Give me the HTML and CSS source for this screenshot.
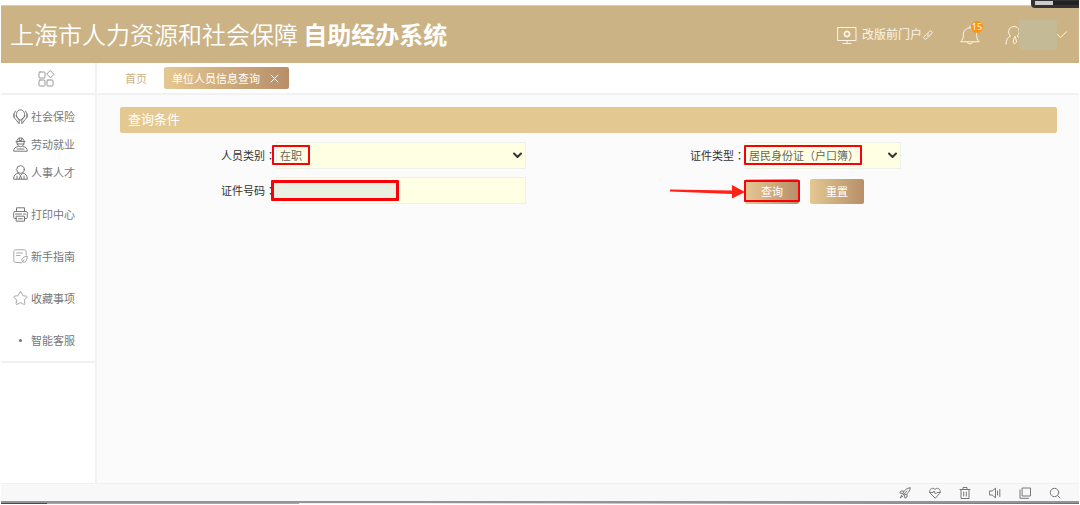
FILE: index.html
```
<!DOCTYPE html>
<html lang="zh-CN">
<head>
<meta charset="utf-8">
<meta name="viewport" content="width=device-width, initial-scale=1">
<title>自助经办系统</title>
<link rel="stylesheet" href="styles.css">
</head>
<body>
<div class="app">
  <header class="header">
    <h1 class="title">上海市人力资源和社会保障 <strong>自助经办系统</strong></h1>
    <div class="header-tools">
      <a class="portal" href="#">
        <svg class="icon" width="20" height="20" viewBox="0 0 20 20"><path d="M1 2.500h18v13H1zM10 15.500v3M6 18.500h8"/><circle cx="10" cy="9" r="2.500" stroke-width="1.500"/><path d="M10 5.800v.5M10 11.700v.5M6.800 9h.5M12.700 9h.5"/></svg>
        <span>改版前门户</span>
        <svg class="icon link-icon" width="10" height="10" viewBox="0 0 10 10"><path d="M4.500 3.200 6.300 1.400a1.600 1.600 0 0 1 2.300 2.300L6.500 5.800a1.600 1.600 0 0 1-2.200 0M5.500 6.800 3.700 8.600a1.600 1.600 0 0 1-2.300-2.300l2.100-2.100a1.600 1.600 0 0 1 2.200 0"/></svg>
      </a>
      <button class="bell" type="button" aria-label="消息">
        <svg class="icon" width="20" height="20" viewBox="0 0 20 20"><path d="M1 16.500c2-2 2.300-3.500 2.300-7a6.700 6.700 0 0 1 13.400 0c0 3.500.3 5 2.300 7zM7 17c.7 2.500 5.300 2.500 6 0M10 2.800V1"/></svg>
        <span class="badge">15</span>
      </button>
      <button class="user" type="button" aria-label="用户">
        <svg class="icon" width="16" height="20" viewBox="0 0 16 20"><path d="M1 19c0-4 1.500-6.500 4.500-8C2 8 3.500 1.500 9 1.500S16 8 12 11c1.500.5 2.500 1.500 3 3M9.500 12l-1.500 5 1.500 2 2-2-1-5z"/></svg>
        <span class="user-name"></span>
        <svg class="icon" width="10" height="8" viewBox="0 0 10 8"><path d="m.5 3.500 3 3L9.500.8"/></svg>
      </button>
    </div>
    <span class="floating-widget"></span>
  </header>

  <div class="body">
    <aside class="sidebar">
      <button class="menu-toggle" type="button" aria-label="菜单">
        <svg class="icon" width="17" height="17" viewBox="0 0 17 17"><rect x="1" y="2" width="6" height="6" rx="1"/><rect x="1" y="10" width="6" height="6" rx="1"/><rect x="9" y="10" width="6" height="6" rx="1"/><path d="m12.500.8 3.500 3.500-3.500 3.500L9 4.300z"/></svg>
      </button>
      <nav class="menu">
        <div class="menu-group">
          <a class="menu-item" href="#"><svg class="icon" width="15" height="15" viewBox="0 0 15 15"><path d="M5.200 9.500C2 7 3.300.8 7.500.8S13 7 9.800 9.500L7.500 11zM2.500 2C-.2 5.500.5 9 3 10.500l2.500 3.700M3 7l3.200 4v3.500M12.500 2c2.700 3.500 2 7-.5 8.500l-2.500 3.700M12 7l-3.200 4v3.500M1 5v3M14 5v3"/></svg><span>社会保险</span></a>
          <a class="menu-item" href="#"><svg class="icon" width="15" height="15" viewBox="0 0 15 15"><path d="M3 4.500h9M3.800 4.500C3.800-.3 11.200-.3 11.200 4.500M6.300 1v2.500h2.400V1M3.800 5c0 6.500 7.400 6.500 7.400 0M4 7h7M5 9.500c-3 .5-4.300 2-4.300 4.700h13.600c0-2.700-1.300-4.200-4.300-4.700M4 12h7"/></svg><span>劳动就业</span></a>
          <a class="menu-item" href="#"><svg class="icon" width="15" height="15" viewBox="0 0 15 15"><circle cx="7.500" cy="4.500" r="3.800"/><path d="M5 8C2 9 .7 10.500.7 14.200h13.600C14.300 10.500 13 9 10 8M5.500 8.500l2 2 2-2M7.500 10.500 6.300 14M7.500 10.500 8.700 14M4 11v3M11 11v3"/></svg><span>人事人才</span></a>
        </div>
        <a class="menu-item" href="#"><svg class="icon" width="15" height="15" viewBox="0 0 15 15"><path d="M3.500 4.500V.8h8v3.700M3.500 11.500H1.800q-1.100 0-1.100-1.100V5.600q0-1.100 1.100-1.100h11.400q1.100 0 1.100 1.100v4.800q0 1.100-1.100 1.100h-1.700M3.500 9.200h8v5h-8zM5.500 11.800h4M2.500 7h6M10.500 7h2"/></svg><span>打印中心</span></a>
        <a class="menu-item light" href="#"><svg class="icon" width="15" height="15" viewBox="0 0 15 15"><path d="M7.500 13.500H2.700Q.8 13.500.8 11.600V2.700Q.8.800 2.700.8h8.600q1.900 0 1.900 1.900v3.500M3.500 4h6M3.500 6.500h3.500M14 7.500c-3.500 0-5.500 1.500-5 4.500 1 1.500 3 1.500 4 .2 1-1.200 1-2.900 1-4.700zM8 14.500l3-3.500"/></svg><span>新手指南</span></a>
        <a class="menu-item light" href="#"><svg class="icon" width="15" height="15" viewBox="0 0 15 15"><path d="M7.500.8q.5 0 .8.700l1.600 3.200 3.600.5q1.200.3.400 1.200l-2.600 2.500.6 3.700q.1 1.200-1 .8L7.500 11.700l-3.400 1.700q-1.100.4-1-.8l.6-3.700L1.100 6.400q-.8-.9.400-1.200l3.600-.5 1.600-3.200q.3-.7.800-.7z"/></svg><span>收藏事项</span></a>
        <a class="menu-item" href="#"><svg class="dot" width="15" height="15" viewBox="0 0 15 15"><circle cx="7.500" cy="7.500" r="1.500"/></svg><span>智能客服</span></a>
      </nav>
    </aside>

    <div class="workspace">
      <nav class="tabs">
        <a class="home-tab" href="#">首页</a>
        <div class="tab">
          <a href="#">单位人员信息查询</a>
          <button class="tab-close" type="button" aria-label="关闭"><svg class="icon" width="9" height="9" viewBox="0 0 9 9"><path d="m1 1 7 7M8 1 1 8"/></svg></button>
        </div>
      </nav>
      <main class="content">
        <h2 class="panel-title">查询条件</h2>
        <form class="query">
          <label for="category">人员类别<span class="colon" lang="zh-TW">：</span></label>
          <div class="field">
            <select id="category"><option>在职</option></select>
            <svg class="icon chevron" width="9" height="7" viewBox="0 0 9 7"><path d="m1 1.500 3.500 3.500L8 1.500"/></svg>
            <span class="mark mark-category"></span>
          </div>
          <label for="idtype">证件类型<span class="colon" lang="zh-TW">：</span></label>
          <div class="field">
            <select id="idtype"><option>居民身份证（户口簿）</option></select>
            <svg class="icon chevron" width="9" height="7" viewBox="0 0 9 7"><path d="m1 1.500 3.500 3.500L8 1.500"/></svg>
            <span class="mark mark-type"></span>
          </div>
          <label class="second" for="idnumber">证件号码<span class="colon" lang="zh-TW">：</span></label>
          <div class="field">
            <input id="idnumber" type="text">
            <span class="mark mark-number"></span>
          </div>
          <div class="actions">
            <button class="btn" type="button">查询</button>
            <button class="btn" type="reset">重置</button>
            <span class="mark mark-search"></span>
            <svg class="arrow" width="76" height="16" viewBox="0 0 76 16"><path d="M1 5.500 63 6.500V1l13 7-13 6.500V10L1 7.500z"/></svg>
          </div>
        </form>
      </main>
    </div>
  </div>

  <footer class="statusbar">
    <button type="button" aria-label="加速"><svg class="icon" width="12" height="12" viewBox="0 0 12 12"><path d="M4 6.500C5 3 8 1 11.300.700 11 4 9 7 5.500 8zM4.500 4H2L.8 6l2.700.5M8 7.500V10l-2 1.200-.5-2.700M3 8 1 11l3-2M5 7l3-3"/></svg></button>
    <button type="button" aria-label="健康"><svg class="icon" width="12" height="12" viewBox="0 0 12 12"><path d="M6 11 1.300 6.300C-1 3.500 3-.8 6 2.500 9-.8 13 3.500 10.700 6.300zM1 5.500h3l1-1.500 1.500 3L8 5.500h3"/></svg></button>
    <button type="button" aria-label="清理"><svg class="icon" width="12" height="12" viewBox="0 0 12 12"><path d="M1 2.500h10M4 2.500v-2h4v2M2 2.500v9h8v-9M4.700 5v4M7.300 5v4"/></svg></button>
    <button type="button" aria-label="声音"><svg class="icon" width="12" height="12" viewBox="0 0 12 12"><path d="M.8 4h2.400l3.300-2.800v9.600L3.200 8H.8zM8.500 4v4M10.800 2.500v7"/></svg></button>
    <button type="button" aria-label="窗口"><svg class="icon" width="12" height="12" viewBox="0 0 12 12"><path d="M3.500 1h8v8h-8zM1 3v8.300h8.500"/></svg></button>
    <button type="button" aria-label="搜索"><svg class="icon" width="12" height="12" viewBox="0 0 12 12"><circle cx="5.500" cy="5.500" r="4.200"/><path d="m8.500 8.500 2.500 2.500"/></svg></button>
  </footer>
  <div class="taskbar-edge"></div>
</div>
</body>
</html>
```

FILE: styles.css
```
* {
  box-sizing: border-box;
}

body {
  margin: 0;
  font: 11px/16px "Noto Sans CJK SC", sans-serif;
  color: #333;
  background: #fff;
}

a {
  color: inherit;
  text-decoration: none;
}

button {
  padding: 0;
  border: 0;
  background: none;
  color: inherit;
  font: inherit;
}

svg {
  display: block;
  flex: none;
}

.icon {
  fill: none;
  stroke: currentColor;
  stroke-linecap: round;
  stroke-linejoin: round;
}

.app {
  display: flex;
  flex-direction: column;
  min-height: 100vh;
  padding: 5px 1px 0;
}

.header {
  position: relative;
  display: flex;
  align-items: center;
  justify-content: space-between;
  height: 58px;
  padding: 0 12px 0 9px;
  border-top: 1px solid #dccfac;
  background: #cbb385;
  color: #fff;
}

.title {
  margin: 0;
  padding-bottom: 2px;
  font-size: 24px;
  line-height: 36px;
  font-weight: 350;
}

.title strong {
  font-weight: 700;
}

.header-tools,
.portal,
.user {
  display: flex;
  align-items: center;
}

.header-tools {
  color: #fbf5e8;
}

.portal {
  gap: 5px;
  font-size: 12px;
}

.portal span {
  padding-bottom: 2px;
}

.link-icon {
  margin-left: -4px;
}

.bell {
  position: relative;
  margin-left: 27px;
}

.badge {
  position: absolute;
  top: -4px;
  right: -3px;
  width: 12px;
  height: 12px;
  border-radius: 6px;
  background: #ff920e;
  color: #fff;
  font: 9px/12px "Noto Sans", sans-serif;
  text-align: center;
}

.user {
  margin-left: 25px;
}

.user-name {
  width: 38px;
  height: 30px;
  margin-left: -2px;
  background: #c4ba96;
  z-index: 1;
}

.floating-widget {
  position: absolute;
  top: -6px;
  right: 0;
  width: 48px;
  height: 8px;
  border: solid #333;
  border-width: 1px 0 3px 4px;
  border-radius: 0 0 0 4px;
  background: linear-gradient(90deg, #ccc 18px, #222 18px);
}

.body {
  display: flex;
  flex: 1;
}

.sidebar {
  flex: none;
  width: 96px;
  border-right: 2px solid #f1f1f1;
}

.menu-toggle {
  display: flex;
  align-items: center;
  justify-content: center;
  width: 100%;
  height: 32px;
  padding-right: 4px;
  border-bottom: 2px solid #f1f1f1;
  color: #999;
}

.menu {
  display: flex;
  flex-direction: column;
  gap: 14px;
  padding: 7px 0 7px 12px;
  border-bottom: 2px solid #f1f1f1;
  color: #777;
}

.menu-item {
  display: flex;
  align-items: center;
  gap: 3px;
  height: 28px;
}

.menu-item span {
  padding-bottom: 1px;
}

.light .icon {
  color: #aaa;
}

.dot {
  fill: #777;
}

.workspace {
  display: flex;
  flex: 1;
  flex-direction: column;
  min-width: 0;
}

.tabs {
  display: flex;
  align-items: center;
  gap: 17px;
  height: 32px;
  padding-left: 28px;
  border-bottom: 2px solid #f1f1f1;
}

.home-tab {
  color: #cbb385;
}

.tab {
  display: flex;
  align-items: center;
  gap: 10px;
  height: 22px;
  padding: 0 10px 0 8px;
  border-radius: 2px;
  background: linear-gradient(90deg, #e4c892, #b88e68);
  color: #fff;
}

.content {
  flex: 1;
  padding: 12px 22px 0 23px;
  background: #fbfbfb;
}

.panel-title {
  margin: 0;
  padding: 0 8px 2px;
  border-radius: 2px;
  background: #e4c892;
  color: #fff;
  font-size: 13px;
  line-height: 24px;
  font-weight: 400;
}

.query {
  display: grid;
  grid-template-columns: minmax(0, 156fr) minmax(0, 250fr) minmax(0, 219fr) minmax(0, 156fr) minmax(0, 156fr);
  row-gap: 8px;
  padding-top: 9px;
}

.query label {
  line-height: 27px;
  text-align: right;
}

.query .second {
  grid-column: 1;
}

.colon {
  font-family: "Noto Sans CJK TC", sans-serif;
}

.field {
  position: relative;
}

.field select,
.field input {
  display: block;
  width: 100%;
  height: 27px;
  margin: 0;
  padding: 0 3px 2px;
  border: 1px solid #eef0ea;
  border-radius: 0;
  background: #ffffe3;
  color: #666;
  font: inherit;
  appearance: none;
}

.chevron {
  position: absolute;
  top: 10px;
  right: 4px;
  color: #333;
  stroke-width: 2;
  pointer-events: none;
}

.actions {
  position: relative;
  display: flex;
  grid-column: 4 / 6;
  gap: 11px;
  padding-top: 2px;
}

.btn {
  width: 54px;
  height: 25px;
  padding-bottom: 2px;
  border-radius: 2px;
  background: linear-gradient(90deg, #e4c892, #b88e68);
  color: #fff;
}

.mark {
  position: absolute;
  border: 2px solid #f9000a;
  border-radius: 1px;
  pointer-events: none;
}

.mark-category {
  top: 3px;
  left: -4px;
  width: 38px;
  height: 20px;
}

.mark-type {
  top: 3px;
  left: -1px;
  width: 118px;
  height: 20px;
}

.mark-number {
  top: 3px;
  left: -5px;
  width: 128px;
  height: 21px;
  border-width: 3px;
  background: #eaf0df;
}

.mark-search {
  top: 3px;
  left: -1px;
  width: 56px;
  height: 22px;
}

.arrow {
  position: absolute;
  top: 7px;
  left: -76px;
  fill: #ff2316;
}

.statusbar {
  display: flex;
  align-items: center;
  justify-content: flex-end;
  gap: 18px;
  height: 18px;
  padding-right: 18px;
  border-top: 1px solid #f1f1f1;
  background: #f8f8f8;
  color: #777;
}

.taskbar-edge {
  height: 4px;
  border-top: 2px solid #929499;
  border-bottom: 1px solid #fff;
  background: linear-gradient(90deg, #3d4a66 46px, #a2a5b3 46px 298px, #eceef2 298px 420px, #a9b8ca 700px, #667080);
}
```
